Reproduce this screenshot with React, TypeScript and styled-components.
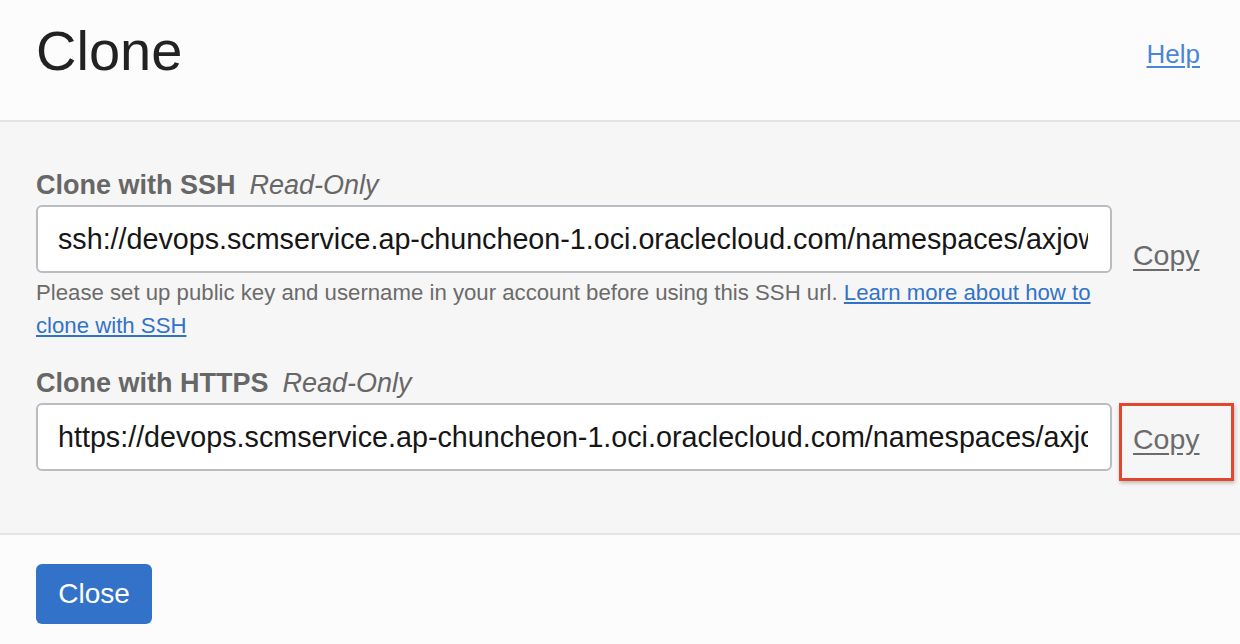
import React from "react";
import styled, { createGlobalStyle } from "styled-components";

const Global = createGlobalStyle`
  html, body { margin: 0; padding: 0; }
  body {
    font-family: "Liberation Sans", Arial, Helvetica, sans-serif;
    background: #fcfcfc;
    width: 1240px;
    height: 644px;
    overflow: hidden;
  }
  * { box-sizing: border-box; }
`;

const Dialog = styled.div`
  display: flex;
  flex-direction: column;
  width: 1240px;
  height: 644px;
`;

const Header = styled.header`
  display: flex;
  justify-content: space-between;
  align-items: flex-start;
  height: 122px;
  padding: 23px 40px 0 36px;
  background: #fcfcfc;
  border-bottom: 2px solid #e4e4e4;
`;

const Title = styled.h1`
  margin: 0;
  font-size: 56px;
  line-height: 56px;
  font-weight: 400;
  color: #222222;
`;

const HelpLink = styled.a`
  margin-top: 18px;
  font-size: 26px;
  line-height: 26px;
  color: #4a86d6;
  text-decoration: underline;
  text-underline-offset: 3px;
`;

const Body = styled.main`
  flex: 1;
  background: #f6f6f6;
  padding: 47px 0 0 36px;
  display: grid;
  grid-template-columns: 1076px 1fr;
  column-gap: 21px;
  align-content: start;
`;

const Label = styled.div<{ $first?: boolean }>`
  grid-column: 1 / span 2;
  font-size: 27px;
  line-height: 32px;
  font-weight: 700;
  color: #676767;
  margin-top: ${(p) => (p.$first ? "0" : "25px")};
  margin-bottom: 4px;
`;

const ReadOnly = styled.span`
  font-style: italic;
  font-weight: 400;
  margin-left: 14px;
`;

const UrlInput = styled.input`
  width: 100%;
  height: 68px;
  border: 2px solid #b9bcc1;
  border-radius: 6px;
  background: #ffffff;
  padding: 0 22px 0 20px;
  font-family: "Liberation Sans", Arial, Helvetica, sans-serif;
  font-size: 28.7px;
  color: #161616;
  outline: none;
`;

const CopyCell = styled.div<{ $highlighted?: boolean }>`
  position: relative;
  display: flex;
  align-items: ${(p) => (p.$highlighted ? "center" : "flex-end")};
  padding: ${(p) => (p.$highlighted ? "4px 0 0 0" : "0 0 1px 0")};
  ${(p) =>
    p.$highlighted
      ? `
    &::after {
      content: "";
      position: absolute;
      left: -14px;
      top: 0;
      width: 109px;
      height: 72px;
      border: 3px solid #e2462c;
      box-shadow: 1px 2px 4px rgba(0,0,0,0.25);
      pointer-events: none;
    }
  `
      : ""}
`;

const CopyLink = styled.a`
  font-size: 28.5px;
  line-height: 34px;
  color: #6b6b6b;
  text-decoration: underline;
  text-underline-offset: 4px;
  cursor: pointer;
`;

const HelpText = styled.p`
  grid-column: 1;
  margin: 3px 0 0 0;
  font-size: 22.2px;
  line-height: 33px;
  color: #6b6b6b;
`;

const InlineLink = styled.a`
  color: #3273c8;
  text-decoration: underline;
  text-underline-offset: 2px;
`;

const Footer = styled.footer`
  height: 111px;
  background: #fcfcfc;
  border-top: 2px solid #e4e4e4;
  padding: 29px 36px 0 36px;
  display: flex;
  align-items: flex-start;
`;

const Button = styled.button`
  width: 116px;
  height: 60px;
  border: none;
  border-radius: 6px;
  background: #3272c8;
  color: #ffffff;
  font-family: "Liberation Sans", Arial, Helvetica, sans-serif;
  font-size: 28px;
  cursor: pointer;
`;

export default function App() {
  return (
    <>
      <Global />
      <Dialog>
        <Header>
          <Title>Clone</Title>
          <HelpLink>Help</HelpLink>
        </Header>
        <Body>
          <Label $first>
            Clone with SSH<ReadOnly>Read-Only</ReadOnly>
          </Label>
          <UrlInput
            readOnly
            value="ssh://devops.scmservice.ap-chuncheon-1.oci.oraclecloud.com/namespaces/axjowrxaexxx/projects/DevOps/repositories/repo"
          />
          <CopyCell>
            <CopyLink>Copy</CopyLink>
          </CopyCell>
          <HelpText>
            Please set up public key and username in your account before using this SSH url.{" "}
            <InlineLink>Learn more about how to clone with SSH</InlineLink>
          </HelpText>
          <Label>
            Clone with HTTPS<ReadOnly>Read-Only</ReadOnly>
          </Label>
          <UrlInput
            readOnly
            value="https://devops.scmservice.ap-chuncheon-1.oci.oraclecloud.com/namespaces/axjowrxaexxx/projects/DevOps/repositories/repo"
          />
          <CopyCell $highlighted>
            <CopyLink>Copy</CopyLink>
          </CopyCell>
        </Body>
        <Footer>
          <Button>Close</Button>
        </Footer>
      </Dialog>
    </>
  );
}
